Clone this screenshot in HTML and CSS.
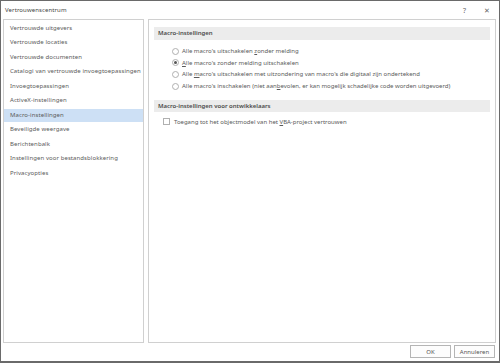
FILE: index.html
```html
<!DOCTYPE html>
<html lang="nl">
<head>
    <meta charset="UTF-8">
    <title>Vertrouwenscentrum</title>
    <link rel="stylesheet" href="styles.css">
</head>
<body>
    <div class="window">
        <div class="titlebar">
            <span class="title">Vertrouwenscentrum</span>
            <span class="tb-btn">?</span>
            <span class="tb-btn close">&#x2715;</span>
        </div>

        <div class="main">
            <ul class="nav">
                <li>Vertrouwde uitgevers</li>
                <li>Vertrouwde locaties</li>
                <li>Vertrouwde documenten</li>
                <li>Catalogi van vertrouwde invoegtoepassingen</li>
                <li>Invoegtoepassingen</li>
                <li>ActiveX-instellingen</li>
                <li class="active">Macro-instellingen</li>
                <li>Beveiligde weergave</li>
                <li>Berichtenbalk</li>
                <li>Instellingen voor bestandsblokkering</li>
                <li>Privacyopties</li>
            </ul>

            <div class="content">
                <div class="section-head">Macro-instellingen</div>
                <div class="options">
                    <label class="option"><span class="radio"></span><span>Alle macro's uitschakelen <u>z</u>onder melding</span></label>
                    <label class="option"><span class="radio checked"></span><span><u>A</u>lle macro's zonder melding uitschakelen</span></label>
                    <label class="option"><span class="radio"></span><span>Alle <u>m</u>acro's uitschakelen met uitzondering van macro's die digitaal zijn ondertekend</span></label>
                    <label class="option"><span class="radio"></span><span>Alle macro's inschakelen (niet aan<u>b</u>evolen, er kan mogelijk schadelijke code worden uitgevoerd)</span></label>
                </div>

                <div class="section-head second">Macro-instellingen voor ontwikkelaars</div>
                <label class="option check-row"><span class="checkbox"></span><span>Toegang tot het objectmodel van het <u>V</u>BA-project vertrouwen</span></label>
            </div>
        </div>

        <div class="footer">
            <button class="btn">OK</button>
            <button class="btn">Annuleren</button>
        </div>
    </div>
</body>
</html>
```

FILE: styles.css
```css
body {
    margin: 0;
    background: #ffffff;
    font-family: 'Noto Sans', 'Open Sans', sans-serif;
    color: #5a5a5a;
}

.window {
    width: 500px;
    height: 363px;
    box-sizing: border-box;
    border: 1px solid #6a6a6a;
    border-bottom-width: 2px;
    background: #fff;
    display: flex;
    flex-direction: column;
}

.titlebar {
    height: 18px;
    display: flex;
    align-items: center;
    padding-left: 4px;
    font-size: 6px;
    letter-spacing: 0.1px;
    color: #444;
}

.title {
    flex: 1;
}

.tb-btn {
    width: 23px;
    text-align: center;
    font-size: 7px;
    color: #666;
}

.main {
    height: 324px;
    display: flex;
    gap: 4px;
    padding: 0 3px 0 2px;
}

.nav {
    list-style: none;
    margin: 0;
    padding: 1.5px 0 0;
    width: 141px;
    box-sizing: border-box;
    border: 1px solid #d0d0d0;
    font-size: 6px;
    letter-spacing: 0.08px;
}

.nav li {
    height: 13px;
    line-height: 13px;
    margin-bottom: 1.5px;
    padding-left: 6px;
    white-space: nowrap;
}

.nav li.active {
    background: #cde0f5;
}

.content {
    flex: 1;
    box-sizing: border-box;
    border: 1px solid #d0d0d0;
    padding: 7px 5px;
    font-size: 6px;
}

.section-head {
    height: 13px;
    line-height: 13px;
    padding-left: 4px;
    background: #ececec;
    font-weight: 600;
    color: #4a4a4a;
}

.section-head.second {
    height: 12px;
    line-height: 12px;
    margin-top: 8px;
}

.options {
    margin-top: 5.5px;
    padding-left: 18px;
}

.option {
    display: flex;
    align-items: center;
    height: 11.6px;
    white-space: nowrap;
}

.option u {
    text-decoration-thickness: 0.5px;
}

.radio {
    width: 5px;
    height: 5px;
    border: 1px solid #b0b0b0;
    border-radius: 50%;
    margin-right: 3px;
    display: flex;
    align-items: center;
    justify-content: center;
}

.radio.checked::after {
    content: "";
    width: 3px;
    height: 3px;
    border-radius: 50%;
    background: #555;
}

.check-row {
    margin-top: 4px;
    height: 12px;
    padding-left: 9px;
}

.checkbox {
    width: 5px;
    height: 5px;
    border: 1px solid #b0b0b0;
    margin-right: 4px;
}

.footer {
    flex: 1;
    display: flex;
    justify-content: flex-end;
    align-items: flex-start;
    gap: 3px;
    padding: 2px 4px 0 0;
}

.btn {
    width: 41px;
    height: 13px;
    padding: 0;
    border: 1px solid #b5b5b5;
    background: #fdfdfd;
    font-family: inherit;
    font-size: 6px;
    color: #555;
}
```
